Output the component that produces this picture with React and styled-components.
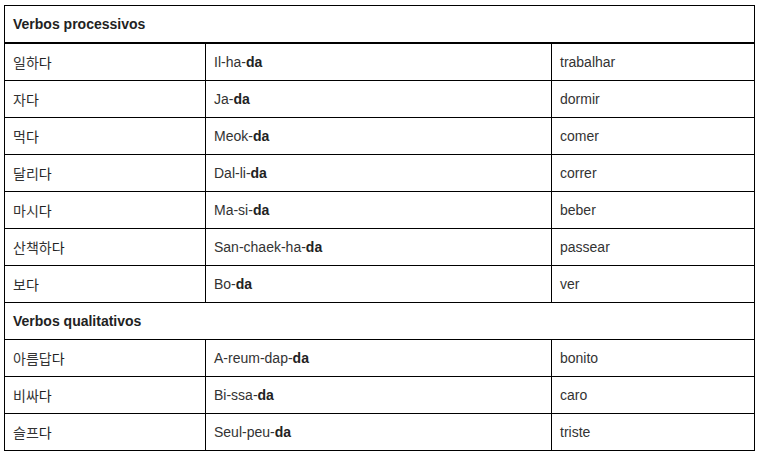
import React from 'react'
import styled, { createGlobalStyle } from 'styled-components'

const GlobalStyle = createGlobalStyle`
    body {
        margin: 0;
        background: #fff;
        font-family: "Liberation Sans", Arial, "Noto Sans CJK KR", sans-serif;
        color: #333;
    }
`;

const Page = styled.div`
    padding: 5px 0 0 4px;
`;

const Table = styled.table`
    width: 750px;
    border-collapse: collapse;
    table-layout: fixed;
    font-size: 14px;
`;

const Cell = styled.td`
    height: 36px;
    padding: 0 0 0 8px;
    border: 1px solid #000;
    vertical-align: middle;
    font-family: ${(p) => (p.$ko ? '"Noto Sans CJK KR", "Liberation Sans", sans-serif' : 'inherit')};
    font-size: 14px;
`;

const GroupCell = styled(Cell)`
    font-weight: bold;
    color: #222;
    border-bottom-width: ${(p) => (p.$thick ? '2px' : '1px')};
`;

const Strong = styled.b`
    font-weight: bold;
    color: #222;
`;

const KoEnd = styled.span`
    color: #222;
`;

const processivos = [
    ['일하', 'Il-ha-', 'trabalhar'],
    ['자', 'Ja-', 'dormir'],
    ['먹', 'Meok-', 'comer'],
    ['달리', 'Dal-li-', 'correr'],
    ['마시', 'Ma-si-', 'beber'],
    ['산책하', 'San-chaek-ha-', 'passear'],
    ['보', 'Bo-', 'ver'],
];

const qualitativos = [
    ['아름답', 'A-reum-dap-', 'bonito'],
    ['비싸', 'Bi-ssa-', 'caro'],
    ['슬프', 'Seul-peu-', 'triste'],
];

const VerbRow = ({ verb }) => (
    <tr>
        <Cell $ko>{verb[0]}<KoEnd>다</KoEnd></Cell>
        <Cell>{verb[1]}<Strong>da</Strong></Cell>
        <Cell>{verb[2]}</Cell>
    </tr>
);

const App = () => {
    return (
        <>
            <GlobalStyle />
            <Page>
                <Table>
                    <colgroup>
                        <col style={{ width: 201 }} />
                        <col style={{ width: 346 }} />
                        <col style={{ width: 203 }} />
                    </colgroup>
                    <tbody>
                        <tr>
                            <GroupCell colSpan={3} $thick>Verbos processivos</GroupCell>
                        </tr>
                        {processivos.map((v) => <VerbRow key={v[1]} verb={v} />)}
                        <tr>
                            <GroupCell colSpan={3}>Verbos qualitativos</GroupCell>
                        </tr>
                        {qualitativos.map((v) => <VerbRow key={v[1]} verb={v} />)}
                    </tbody>
                </Table>
            </Page>
        </>
    )
}

export default App
